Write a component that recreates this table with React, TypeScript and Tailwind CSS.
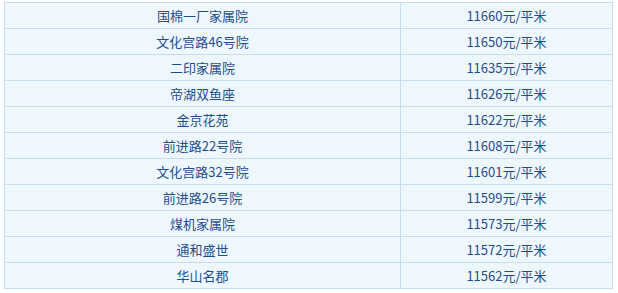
const rows: [string, string][] = [
  ['国棉一厂家属院', '11660元/平米'],
  ['文化宫路46号院', '11650元/平米'],
  ['二印家属院', '11635元/平米'],
  ['帝湖双鱼座', '11626元/平米'],
  ['金京花苑', '11622元/平米'],
  ['前进路22号院', '11608元/平米'],
  ['文化宫路32号院', '11601元/平米'],
  ['前进路26号院', '11599元/平米'],
  ['煤机家属院', '11573元/平米'],
  ['通和盛世', '11572元/平米'],
  ['华山名郡', '11562元/平米'],
]

export default function App() {
  return (
    <div className="h-[293px] w-[618px] bg-white pl-[4px] pt-[2px]">
      <table
        className="w-[609px] border-collapse bg-[#eef6fe] text-[13px] text-[#1d4f8c]"
        style={{ fontFamily: '"Noto Sans CJK SC", "Noto Sans", sans-serif' }}
      >
        <tbody>
          {rows.map(([name, price]) => (
            <tr key={name} className="h-[26px]">
              <td className="w-[396px] border border-[#c6dcf0] p-0 text-center leading-[25px]">{name}</td>
              <td className="border border-[#c6dcf0] p-0 text-center leading-[25px]">{price}</td>
            </tr>
          ))}
        </tbody>
      </table>
    </div>
  )
}
